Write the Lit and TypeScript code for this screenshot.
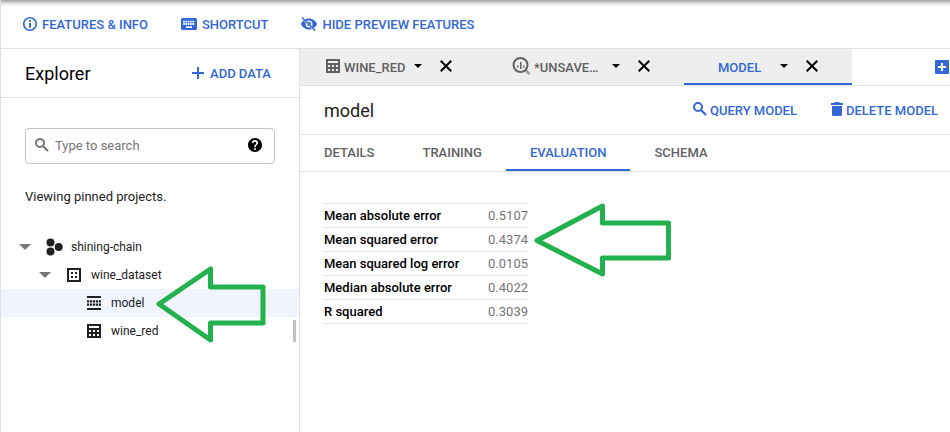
import { LitElement, html, css, svg, nothing } from "lit";
import { customElement, property, state } from "lit/decorators.js";
import { classMap } from "lit/directives/class-map.js";

interface IconDef {
  w: number;
  h: number;
  box: string;
  body: unknown;
}

const icons: Record<string, IconDef> = {
  info: {
    w: 14, h: 14, box: "2 2 20 20",
    body: svg`<path d="M10.600 6.500h2.800v2.500h-2.800zm0 4h2.800v7h-2.800zM12 2C6.480 2 2 6.480 2 12s4.480 10 10 10 10-4.480 10-10S17.520 2 12 2zm0 17.700c-4.200 0-7.700-3.500-7.700-7.700S7.800 4.300 12 4.300s7.700 3.500 7.700 7.700-3.500 7.700-7.700 7.700z"/>`,
  },
  keyboard: {
    w: 16, h: 12, box: "0 0 16 12",
    body: svg`<path d="M1.500 0h13A1.500 1.500 0 0 1 16 1.500v9a1.500 1.500 0 0 1-1.500 1.500h-13A1.500 1.500 0 0 1 0 10.500v-9A1.500 1.500 0 0 1 1.500 0z"/><path stroke="#fff" stroke-width="1.800" stroke-dasharray="1.600 .7" d="M2.200 3.600h11.700M2.200 6h11.700"/><path fill="#fff" d="M5 8.300h6V10H5z"/>`,
  },
  hidden: {
    w: 16, h: 14, box: "0 0 16 14",
    body: svg`<path fill-rule="evenodd" d="M8 1.500c3.600 0 6.700 2.300 8 5.500-1.300 3.200-4.400 5.500-8 5.500S1.300 10.200 0 7c1.300-3.200 4.400-5.500 8-5.500zM8 3.500a3.500 3.500 0 1 0 0 7 3.500 3.500 0 0 0 0-7z"/><circle cx="8" cy="7" r="2.200"/><path d="M1.800 1.400 14 13.600" stroke="#fff" stroke-width="2"/><path d="M1 .6 14.200 13.600" stroke="currentColor" stroke-width="1.400"/>`,
  },
  plus: {
    w: 12, h: 12, box: "0 0 12 12",
    body: svg`<path d="M5 0h2v5h5v2H7v5H5V7H0V5h5z"/>`,
  },
  plusBox: {
    w: 14, h: 14, box: "0 0 14 14",
    body: svg`<path fill-rule="evenodd" d="M1 0h12a1 1 0 0 1 1 1v12a1 1 0 0 1-1 1H1a1 1 0 0 1-1-1V1a1 1 0 0 1 1-1zM6 3v3H3v2h3v3h2V8h3V6H8V3z"/>`,
  },
  search: {
    w: 14, h: 14, box: "0 0 14 14",
    body: svg`<circle cx="5" cy="5" r="4" fill="none" stroke="currentColor" stroke-width="2"/><path d="m8 8 5 5" stroke="currentColor" stroke-width="2.200"/>`,
  },
  help: {
    w: 14, h: 14, box: "2 2 20 20",
    body: svg`<path d="M12 2C6.480 2 2 6.480 2 12s4.480 10 10 10 10-4.480 10-10S17.520 2 12 2zm1.200 17.200h-2.400v-2.400h2.400v2.400zm2.100-7.800-.9.920C13.600 13 13.200 13.700 13.200 15.200h-2.400v-.5c0-1.100.45-2.100 1.170-2.830l1.240-1.260A2 2 0 0 0 12 7.200a2 2 0 0 0-2 2H7.600a4.400 4.400 0 1 1 8.800 0c0 .88-.36 1.680-1.100 2.200z"/>`,
  },
  table: {
    w: 14, h: 14, box: "0 0 14 14",
    body: svg`<path fill-rule="evenodd" d="M0 0h14v14H0zM2 2v2h10V2zM2 6v2h2V6zM6 6v2h2V6zM10 6v2h2V6zM2 10v2h2v-2zM6 10v2h2v-2zM10 10v2h2v-2z"/>`,
  },
  query: {
    w: 18, h: 18, box: "0 0 18 18",
    body: svg`<circle cx="8.500" cy="8" r="7" fill="none" stroke="currentColor" stroke-width="2"/><path d="M8 5h1.500v7H8z"/><path d="M5 8h1.500v3H5zM11 8h1.500v3H11z" opacity=".65"/><path d="m13.500 13 4 4" stroke="currentColor" stroke-width="2.500" opacity=".6"/>`,
  },
  caret: { w: 8, h: 4, box: "0 0 8 4", body: svg`<path d="M0 0h8L4 4z"/>` },
  expand: { w: 12, h: 6, box: "0 0 12 6", body: svg`<path d="M0 0h12L6 6z"/>` },
  close: {
    w: 12, h: 12, box: "0 0 12 12",
    body: svg`<path d="m.7.7 10.600 10.600M11.300.7.700 11.300" stroke="currentColor" stroke-width="2"/>`,
  },
  trash: {
    w: 12, h: 14, box: "0 0 12 14",
    body: svg`<path d="M4 0h4l1 1h3v2H0V1h3zM1 4h10v8.500a1.500 1.500 0 0 1-1.500 1.500h-7A1.500 1.500 0 0 1 1 12.500z"/>`,
  },
  project: {
    w: 17, h: 18, box: "0 0 17 18",
    body: svg`<circle cx="4.500" cy="4.500" r="4"/><circle cx="4.500" cy="13.500" r="4"/><circle cx="12.700" cy="9" r="4"/>`,
  },
  dataset: {
    w: 14, h: 14, box: "0 0 14 14",
    body: svg`<path fill-rule="evenodd" d="M0 0h14v14H0zM2 2v10h10V2z"/><path d="M4 4h2v2H4zM8 4h2v2H8zM4 8h2v2H4zM8 8h2v2H8z"/>`,
  },
  model: {
    w: 14, h: 14, box: "0 0 14 14",
    body: svg`<path d="M0 0h14v2H0zM0 12h14v2H0z"/><path stroke="currentColor" stroke-width="2.300" stroke-dasharray="2.200 .75" d="M0 5.300h14M0 8.700h14"/>`,
  },
};

const icon = (name: string) => {
  const i = icons[name];
  return html`<svg class="icon" width=${i.w} height=${i.h} viewBox=${i.box} aria-hidden="true">${i.body}</svg>`;
};

const base = css`
  * { box-sizing: border-box; }
  button {
    display: inline-flex;
    align-items: center;
    padding: 0;
    border: 0;
    background: none;
    color: inherit;
    font: inherit;
    white-space: nowrap;
    cursor: pointer;
  }
  .icon { display: block; flex: none; fill: currentColor; }
  .action { gap: 4px; color: #3367d6; font-weight: 500; text-transform: uppercase; }
`;

@customElement("explorer-panel")
export class ExplorerPanel extends LitElement {
  @state() private selected = "model";

  private items = [
    { label: "shining-chain", icon: "project", level: 0, open: true },
    { label: "wine_dataset", icon: "dataset", level: 1, open: true },
    { label: "model", icon: "model", level: 2, open: false },
    { label: "wine_red", icon: "table", level: 2, open: false },
  ];

  static styles = [base, css`
    :host { display: flex; flex-direction: column; border-right: 1px solid #e0e0e0; }
    .head {
      display: flex;
      align-items: center;
      justify-content: space-between;
      height: 49px;
      padding: 0 28px 0 24px;
      border-bottom: 1px solid #e0e0e0;
    }
    h2 { margin: 0; font-size: 18px; font-weight: 400; color: #000; }
    .head .action { gap: 6px; }
    .search {
      display: flex;
      align-items: center;
      gap: 6px;
      height: 36px;
      margin: 30px 24px 0;
      padding: 0 12px 2px 9px;
      border: 1px solid #c6c6c6;
      border-radius: 4px;
      color: #757575;
    }
    input {
      flex: 1;
      min-width: 0;
      padding: 0;
      border: 0;
      outline: 0;
      background: none;
      font: inherit;
      color: #212121;
    }
    input::placeholder { color: #757575; opacity: 1; }
    .help { color: #000; }
    .note { margin: 23px 24px 26px; line-height: 20px; color: #212121; }
    .list { position: relative; margin: 0; padding: 0; list-style: none; font-size: 12px; color: #212121; }
    .row { width: 100%; height: 28px; padding-left: 18px; }
    .level1 { padding-left: 38px; }
    .level2 { padding-left: 58px; }
    .selected { background: #f0f4ff; }
    .twist { display: flex; flex: none; width: 26px; color: #757575; }
    .glyph { display: flex; flex: none; width: 26px; }
    .level0 .glyph { justify-content: center; width: 18px; margin-right: 8px; }
    .level1 .glyph, .level2 .glyph { padding-left: 2px; }
    .item { position: relative; }
    .arrow { position: absolute; left: 154px; top: -23px; pointer-events: none; }
    .thumb { position: absolute; right: 3px; top: 87px; width: 3px; height: 22px; background: #c1c1c1; }
  `];

  render() {
    return html`
      <div class="head">
        <h2>Explorer</h2>
        <button class="action">${icon("plus")}Add data</button>
      </div>
      <div class="search">
        ${icon("search")}
        <input type="text" placeholder="Type to search" aria-label="Type to search" />
        <button class="help" aria-label="Search help">${icon("help")}</button>
      </div>
      <p class="note">Viewing pinned projects.</p>
      <ul class="list">
        ${this.items.map((it) => html`
          <li class="item">
            <button
              class=${classMap({ row: true, ["level" + it.level]: true, selected: it.label === this.selected })}
              @click=${() => (this.selected = it.label)}
            >
              <span class="twist">${it.open ? icon("expand") : nothing}</span>
              <span class="glyph">${icon(it.icon)}</span>
              ${it.label}
            </button>
            ${it.label === "model"
              ? html`<svg class="arrow" width="112" height="77" viewBox="0 0 112 77" aria-hidden="true">
                  <path d="M4 38 55.500 3v18H108v36H55.500v17z" fill="none" stroke="#22b14c" stroke-width="5" stroke-linejoin="round" />
                </svg>`
              : nothing}
          </li>`)}
        <li class="thumb" aria-hidden="true"></li>
      </ul>
    `;
  }
}

@customElement("editor-tab")
export class EditorTab extends LitElement {
  @property() label = "";
  @property() glyph = "";
  @property({ type: Boolean, reflect: true }) active = false;

  static styles = [base, css`
    :host {
      display: flex;
      align-items: center;
      height: 36px;
      padding: 0 34px 0 26px;
      background: #eee;
      border-bottom: 2px solid transparent;
      color: #000;
    }
    :host([active]) { padding-left: 34px; border-bottom-color: #3367d6; }
    .name { flex: 1; gap: 4px; font-weight: 500; color: #616161; }
    :host([active]) .name { color: #3367d6; }
    .text { padding-top: 2px; }
    .menu { margin-right: 18px; }
    .name, .menu, .close { height: 34px; }
  `];

  render() {
    return html`
      <button class="name">${this.glyph ? icon(this.glyph) : nothing}<span class="text">${this.label}</span></button>
      <button class="menu" aria-label="Tab menu">${icon("caret")}</button>
      <button class="close" aria-label="Close tab">${icon("close")}</button>
    `;
  }
}

@customElement("model-view")
export class ModelView extends LitElement {
  @state() private section = "Evaluation";

  private metrics = [
    ["Mean absolute error", "0.5107"],
    ["Mean squared error", "0.4374"],
    ["Mean squared log error", "0.0105"],
    ["Median absolute error", "0.4022"],
    ["R squared", "0.3039"],
  ];

  static styles = [base, css`
    :host { display: block; min-width: 0; }
    .tabs {
      display: grid;
      grid-template-columns: 186px 198px 168px 1fr;
      height: 37px;
      border-bottom: 1px solid #e0e0e0;
    }
    .add { justify-self: end; margin-right: 1px; color: #3367d6; }
    .title {
      display: flex;
      align-items: center;
      height: 49px;
      padding: 0 12px 0 24px;
      border-bottom: 1px solid #e0e0e0;
    }
    h1 { flex: 1; margin: 0; font-size: 18px; font-weight: 400; color: #212121; }
    .title .action { margin-left: 34px; gap: 3px; }
    .title .icon { margin-bottom: 2px; }
    .sections { display: flex; height: 37px; border-bottom: 1px solid #e0e0e0; }
    .section {
      height: 36px;
      padding: 0 24px;
      border-bottom: 2px solid transparent;
      font-weight: 500;
      color: #616161;
      text-transform: uppercase;
    }
    .section.on { color: #3367d6; border-bottom-color: #3367d6; }
    .metrics { position: relative; width: 204px; margin: 31px 24px; }
    table { width: 100%; border-collapse: separate; border-spacing: 0; border-top: 1px solid #e0e0e0; }
    th, td { height: 24px; padding: 0; border-bottom: 1px solid #e0e0e0; white-space: nowrap; line-height: 20px; }
    th { text-align: left; font-weight: 500; color: #000; }
    td { text-align: right; color: #757575; }
    .arrow { position: absolute; left: 209px; top: 0; pointer-events: none; }
  `];

  render() {
    return html`
      <div class="tabs">
        <editor-tab label="WINE_RED" glyph="table"></editor-tab>
        <editor-tab label="*UNSAVE…" glyph="query"></editor-tab>
        <editor-tab label="MODEL" active></editor-tab>
        <button class="add" aria-label="New tab">${icon("plusBox")}</button>
      </div>
      <div class="title">
        <h1>model</h1>
        <button class="action">${icon("search")}Query model</button>
        <button class="action">${icon("trash")}Delete model</button>
      </div>
      <div class="sections" role="tablist">
        ${["Details", "Training", "Evaluation", "Schema"].map((s) => html`
          <button
            role="tab"
            aria-selected=${s === this.section}
            class=${classMap({ section: true, on: s === this.section })}
            @click=${() => (this.section = s)}
          >${s}</button>`)}
      </div>
      <div class="metrics">
        <table>
          <tbody>
            ${this.metrics.map(([name, value]) => html`<tr><th scope="row">${name}</th><td>${value}</td></tr>`)}
          </tbody>
        </table>
        <svg class="arrow" width="138" height="76" viewBox="0 0 138 76" aria-hidden="true">
          <path d="M4 37.500 69.500 3v17H135.500v35H69.500v16z" fill="none" stroke="#22b14c" stroke-width="5" stroke-linejoin="round" />
        </svg>
      </div>
    `;
  }
}

@customElement("app-root")
export class AppRoot extends LitElement {
  static styles = [base, css`
    :host {
      display: flex;
      flex-direction: column;
      min-height: 100vh;
      box-sizing: border-box;
      border-left: 1px solid #e0e0e0;
      background: #fff;
      font: 400 13px Roboto, "Liberation Sans", sans-serif;
    }
    .bar {
      display: flex;
      align-items: center;
      gap: 33px;
      height: 49px;
      padding-left: 22px;
      border-bottom: 1px solid #e0e0e0;
      background: linear-gradient(#a8a8a8, #b4b4b4 1px, #dadada 3px, #f6f6f6 5px, #fff 7px);
    }
    .bar .action { gap: 5px; }
    .body { flex: 1; display: grid; grid-template-columns: 299px 1fr; }
  `];

  render() {
    return html`
      <header class="bar">
        <button class="action">${icon("info")}Features &amp; info</button>
        <button class="action">${icon("keyboard")}Shortcut</button>
        <button class="action">${icon("hidden")}Hide preview features</button>
      </header>
      <div class="body">
        <explorer-panel></explorer-panel>
        <model-view></model-view>
      </div>
    `;
  }
}
